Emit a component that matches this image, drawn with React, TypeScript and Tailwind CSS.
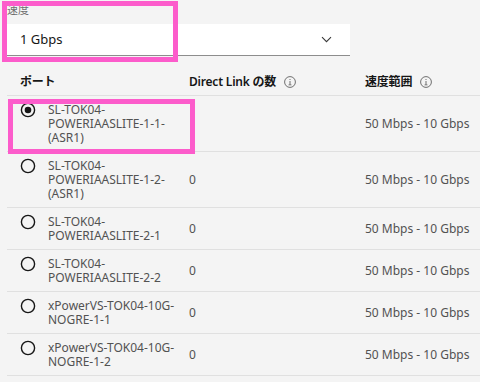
import React from "react";

type Port = { name: string[]; links?: string; speed: string; selected?: boolean };

const ports: Port[] = [
  { name: ["SL-TOK04-", "POWERIAASLITE-1-1-", "(ASR1)"], speed: "50 Mbps - 10 Gbps", selected: true },
  { name: ["SL-TOK04-", "POWERIAASLITE-1-2-", "(ASR1)"], links: "0", speed: "50 Mbps - 10 Gbps" },
  { name: ["SL-TOK04-", "POWERIAASLITE-2-1"], links: "0", speed: "50 Mbps - 10 Gbps" },
  { name: ["SL-TOK04-", "POWERIAASLITE-2-2"], links: "0", speed: "50 Mbps - 10 Gbps" },
  { name: ["xPowerVS-TOK04-10G-", "NOGRE-1-1"], links: "0", speed: "50 Mbps - 10 Gbps" },
  { name: ["xPowerVS-TOK04-10G-", "NOGRE-1-2"], links: "0", speed: "50 Mbps - 10 Gbps" },
];

function InfoIcon() {
  return (
    <svg width="12" height="12" viewBox="0 0 12 12" className="ml-2 shrink-0">
      <circle cx="6" cy="6" r="5.4" fill="none" stroke="#6f6f6f" strokeWidth="1" />
      <rect x="5.5" y="5" width="1" height="4" fill="#6f6f6f" />
      <rect x="5.5" y="3" width="1" height="1" fill="#6f6f6f" />
      <rect x="4.5" y="8.5" width="3" height="0.8" fill="#6f6f6f" />
    </svg>
  );
}

function Radio({ checked }: { checked?: boolean }) {
  return (
    <svg width="16" height="16" viewBox="0 0 16 16" className="shrink-0 -mt-[1px]">
      <circle cx="8" cy="8" r="6.6" fill="none" stroke="#161616" strokeWidth="1.4" />
      {checked && <circle cx="8" cy="8" r="3.3" fill="#161616" />}
    </svg>
  );
}

export default function App() {
  return (
    <div
      className="relative w-[480px] h-[382px] overflow-hidden bg-[#f4f4f4]"
      style={{ fontFamily: '"Noto Sans", "Noto Sans CJK JP", sans-serif' }}
    >
      {/* Speed select */}
      <div className="pl-[7px] w-[350px]">
        <div className="pt-[2px] h-[24px] text-[11px] leading-[16px] text-[#6f6f6f]">速度</div>
        <div className="h-[32px] bg-white border-b border-[#8d8d8d] flex items-center justify-between pl-[13px] pr-[18px]">
          <span className="text-[13px] text-[#161616]">1 Gbps</span>
          <svg width="11" height="7" viewBox="0 0 11 7">
            <path d="M1 1.2 L5.5 5.7 L10 1.2" fill="none" stroke="#393939" strokeWidth="1.1" />
          </svg>
        </div>
      </div>

      {/* Table */}
      <div className="pl-[7px]">
        <div className="grid grid-cols-[182px_176px_1fr] border-b border-[#e0e0e0] pt-[19px] pb-[6px] text-[12px] leading-[14px] font-semibold tracking-[-0.2px] text-[#161616]">
          <div className="pl-[13px]">ポート</div>
          <div className="flex items-center">
            Direct Link の数
            <InfoIcon />
          </div>
          <div className="flex items-center">
            速度範囲
            <InfoIcon />
          </div>
        </div>

        {ports.map((p, i) => (
          <div
            key={i}
            className="grid grid-cols-[182px_176px_1fr] border-b border-[#e0e0e0] pt-[7px] pb-[6px] text-[12px] leading-[14px] text-[#525252]"
          >
            <div className="flex items-start pl-[13px]">
              <Radio checked={p.selected} />
              <div className="ml-[12px]">
                {p.name.map((l) => (
                  <div key={l}>{l}</div>
                ))}
              </div>
            </div>
            <div className="flex items-center">{p.links}</div>
            <div className="flex items-center">{p.speed}</div>
          </div>
        ))}
      </div>

      {/* Highlight boxes */}
      <div className="absolute left-[2px] top-[1px] w-[176px] h-[61px] border-[5px] border-[#fc5ccb]" />
      <div className="absolute left-[8px] top-[99px] w-[187px] h-[55px] border-[5px] border-[#fc5ccb]" />
    </div>
  );
}
